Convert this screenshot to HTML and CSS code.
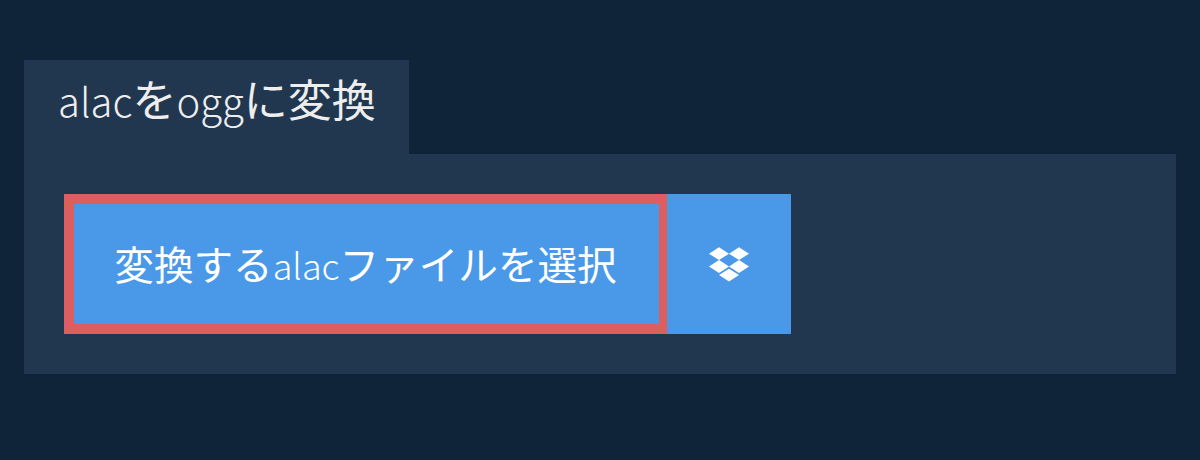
FILE: index.html
```html
<!DOCTYPE html>
<html lang="ja">
<head>
	<meta charset="utf-8">
	<title>alacをoggに変換</title>
	<link rel="stylesheet" href="styles.css">
</head>
<body>
	<div class="wrap">
		<h1 class="tab"><span class="ltn">alac</span>を<span class="ltn">ogg</span>に変換</h1>
		<div class="panel">
			<button class="pick">変換する<span class="ltn">alac</span>ファイルを選択</button>
			<button class="drop" aria-label="Dropbox">
				<svg viewBox="0 0 42 36" width="40" height="35" fill="#fff">
					<path d="M10.5 0 0 6.7l10.5 6.7L21 6.7z"></path>
					<path d="M31.5 0 21 6.7l10.5 6.7L42 6.7z"></path>
					<path d="M0 20.1l10.5 6.7L21 20.1l-10.5-6.7z"></path>
					<path d="M31.5 13.4 21 20.1l10.5 6.7L42 20.1z"></path>
					<path d="M10.5 29.1 21 35.8l10.5-6.7L21 22.4z"></path>
				</svg>
			</button>
		</div>
	</div>
</body>
</html>
```

FILE: styles.css
```css
* {
	margin: 0;
	padding: 0;
	box-sizing: border-box;
}
body {
	background: #0f2439;
	font-family: "Noto Sans CJK JP", sans-serif;
	color: #fff;
}
.wrap {
	padding: 60px 24px 0;
}
.tab {
	display: inline-block;
	vertical-align: top;
	height: 94px;
	padding: 0 33px 0 34px;
	background: #213750;
	color: #eee;
	font-size: 44px;
	font-weight: 400;
	line-height: 76px;
}
.tab .ltn {
	font-size: 40px;
}
.ltn {
	font-weight: 300;
}
.panel {
	display: flex;
	height: 220px;
	padding: 40px;
	background: #213750;
}
.pick, .drop {
	border: none;
	background: #4a99e9;
	color: #fff;
	font-family: inherit;
}
.pick {
	width: 603px;
	border: 10px solid #dd5e5e;
	border-right-width: 8px;
	padding: 0 2px 4px 0;
	font-size: 39.6px;
	font-weight: 400;
}
.pick .ltn {
	font-size: 36px;
}
.drop {
	width: 124px;
	display: flex;
	align-items: center;
	justify-content: center;
}
```
